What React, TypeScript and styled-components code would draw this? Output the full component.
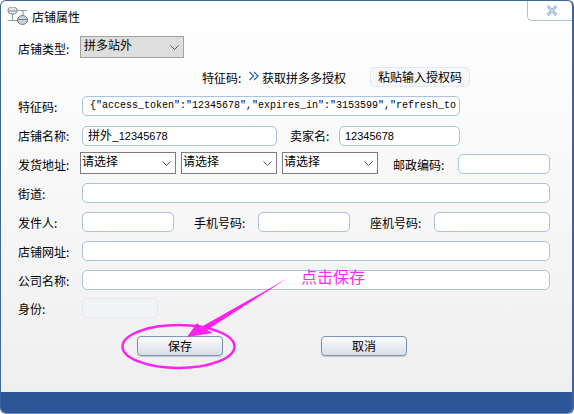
import React from "react";
import styled, { createGlobalStyle } from "styled-components";

const Global = createGlobalStyle`
  html, body { margin: 0; padding: 0; background: #fff; }
  body { font-family: "Noto Sans CJK SC", "Liberation Sans", sans-serif; font-size: 12px; color: #000; }
`;

const Win = styled.div`
  position: relative;
  width: 574px;
  height: 414px;
  box-sizing: border-box;
  border: 1px solid #3f659c;
  border-width: 1px 2px 1px 1px;
  border-bottom-color: #6f8cb8;
  border-radius: 6px;
  overflow: hidden;
  background: linear-gradient(#ffffff 0%, #f7f7f8 50%, #eeeeee 100%);
  display: flex;
  flex-direction: column;
`;

const TitleBar = styled.div`
  height: 35px;
  display: flex;
  align-items: flex-start;
  flex: none;
  position: relative;
`;

const TitleIcon = styled.svg`
  width: 22px;
  height: 20px;
  margin: 6px 0 0 6px;
  flex: none;
`;

const TitleText = styled.span`
  margin: 7px 0 0 3px;
  line-height: 18px;
  font-size: 12px;
`;

const CloseButton = styled.div`
  position: absolute;
  top: -1px;
  right: -2px;
  width: 47px;
  height: 21px;
  box-sizing: border-box;
  border: 1px solid #a9c3de;
  border-top: 0;
  border-right: 0;
  border-radius: 0 0 0 5px;
  display: flex;
  align-items: center;
  justify-content: flex-start;
  padding-left: 18px;
`;

const Form = styled.div`
  flex: 1;
  padding-left: 17px;
  display: flex;
  flex-direction: column;
`;

const Row = styled.div<{ $top: number; $h?: number }>`
  display: flex;
  align-items: flex-start;
  height: ${(p) => p.$h ?? 20}px;
  margin-top: ${(p) => p.$top}px;
  flex: none;
`;

const Label = styled.span<{ $w: number; $ml?: number; $dy?: number }>`
  width: ${(p) => p.$w}px;
  margin-left: ${(p) => p.$ml ?? 0}px;
  margin-top: ${(p) => p.$dy ?? 2}px;
  line-height: 18px;
  white-space: nowrap;
  flex: none;
`;

const Field = styled.div<{ $w: number; $ml?: number; $mt?: number; $disabled?: boolean }>`
  width: ${(p) => p.$w}px;
  height: 20px;
  margin-left: ${(p) => p.$ml ?? 0}px;
  margin-top: ${(p) => p.$mt ?? 0}px;
  box-sizing: border-box;
  flex: none;
  border: 1px solid ${(p) => (p.$disabled ? "#e4e8ef" : "#a9c3de")};
  border-radius: 5px;
  background: ${(p) => (p.$disabled ? "#f1f3f6" : "#fff")};
  padding-left: 5px;
  line-height: 15px;
  white-space: nowrap;
  overflow: hidden;
`;

const Digits = styled.span`
  font-family: "Liberation Sans", sans-serif;
  font-size: 11px;
`;

const TokenText = styled.span`
  font-family: "Liberation Mono", monospace;
  font-size: 10px;
  line-height: 18px;
  display: block;
  margin-left: 2px;
`;

const Select = styled.div<{ $w: number; $ml?: number; $grey?: boolean }>`
  width: ${(p) => p.$w}px;
  height: 22px;
  margin-left: ${(p) => p.$ml ?? 0}px;
  box-sizing: border-box;
  flex: none;
  border: 1px solid ${(p) => (p.$grey ? "#a3a3a3" : "#7d7d7d")};
  background: ${(p) => (p.$grey ? "#dedede" : "#fff")};
  padding-left: ${(p) => (p.$grey ? 3 : 1)}px;
  line-height: 16px;
  position: relative;
  display: flex;
  justify-content: space-between;
`;

const Chevron = styled.svg`
  width: 9px;
  height: 6px;
  margin: 8px 4px 0 0;
  flex: none;
`;

const LinkArrows = styled.svg`
  width: 10px;
  height: 10px;
  margin: 4px 3px 0 0;
  flex: none;
`;

const LinkText = styled.span`
  margin-top: 2px;
  line-height: 18px;
  width: 108px;
  flex: none;
`;

const PasteButton = styled.div`
  width: 100px;
  height: 20px;
  box-sizing: border-box;
  border: 1px solid #e4eaf2;
  border-radius: 5px;
  background: #f5f7fa;
  text-align: center;
  line-height: 18px;
  flex: none;
`;

const ActionRow = styled.div`
  display: flex;
  margin: 18px 0 0 119px;
  gap: 98px;
  flex: none;
`;

const ActionButton = styled.div`
  width: 86px;
  height: 20px;
  box-sizing: border-box;
  border: 1px solid #7f95b5;
  border-radius: 4px;
  background: linear-gradient(#fbfcfd, #d9dde6);
  box-shadow: 0 1px 1px #c4c8d0;
  text-align: center;
  line-height: 18px;
  color: #000;
`;

const Footer = styled.div`
  height: 21px;
  background: #2b5797;
  flex: none;
`;

const Annotation = styled.svg`
  position: absolute;
  left: -1px;
  top: -1px;
  width: 574px;
  height: 414px;
  pointer-events: none;
`;

const Callout = styled.span`
  position: absolute;
  left: 300px;
  top: 264px;
  font-size: 16px;
  line-height: 22px;
  color: #ff2bf0;
`;

const Arrow = () => (
  <Chevron viewBox="0 0 9 6">
    <path d="M0.5 0.5 L4.5 4.5 L8.5 0.5" fill="none" stroke="#555" strokeWidth="1" />
  </Chevron>
);

export default function App() {
  return (
    <>
      <Global />
      <Win>
        <TitleBar>
          <TitleIcon viewBox="0 0 22 20">
            <path d="M5.5 3.5 H20 M16 3.5 V10 M5.5 7 V13.5 M0.5 13.5 H12" stroke="#7fae8c" strokeWidth="1.2" fill="none" />
            <ellipse cx="5.5" cy="3.5" rx="4.5" ry="3.5" fill="#e4e9ed" stroke="#7a8794" />
            <path d="M1 4 H10" stroke="#7a8794" />
            <ellipse cx="15.5" cy="13" rx="5" ry="4.5" fill="#c9d2da" stroke="#6f7d8a" />
            <path d="M10.5 12.5 H20.5" stroke="#6f7d8a" />
          </TitleIcon>
          <TitleText>店铺属性</TitleText>
          <CloseButton>
            <svg width="12" height="11" viewBox="0 0 12 11">
              <path d="M1.5 1 L10.5 10 M10.5 1 L1.5 10" stroke="#8fb0d4" strokeWidth="2.6" fill="none" />
              <path d="M1.5 1 L10.5 10 M10.5 1 L1.5 10" stroke="#fff" strokeWidth="0.8" fill="none" />
            </svg>
          </CloseButton>
        </TitleBar>
        <Form>
          <Row $top={0} $h={22}>
            <Label $w={62} $dy={4}>店铺类型:</Label>
            <Select $w={104} $grey>拼多站外<Arrow /></Select>
          </Row>
          <Row $top={9}>
            <Label $w={47} $ml={184}>特征码:</Label>
            <LinkArrows viewBox="0 0 10 10">
              <path d="M0.5 1 L4.5 5 L0.5 9 M5 1 L9 5 L5 9" fill="none" stroke="#2f67a8" strokeWidth="1.3" />
            </LinkArrows>
            <LinkText>获取拼多多授权</LinkText>
            <PasteButton>粘贴输入授权码</PasteButton>
          </Row>
          <Row $top={9}>
            <Label $w={64}>特征码:</Label>
            <Field $w={378}>
              <TokenText>{'{"access_token":"12345678","expires_in":"3153599","refresh_to'}</TokenText>
            </Field>
          </Row>
          <Row $top={10} $h={19}>
            <Label $w={64} $dy={1}>店铺名称:</Label>
            <Field $w={195}>拼外_<Digits>12345678</Digits></Field>
            <Label $w={49} $ml={13} $dy={1}>卖家名:</Label>
            <Field $w={121}><Digits>12345678</Digits></Field>
          </Row>
          <Row $top={7} $h={22}>
            <Label $w={62} $dy={4}>发货地址:</Label>
            <Select $w={96}>请选择<Arrow /></Select>
            <Select $w={96} $ml={5}>请选择<Arrow /></Select>
            <Select $w={96} $ml={5}>请选择<Arrow /></Select>
            <Label $w={65} $ml={15} $dy={4}>邮政编码:</Label>
            <Field $w={92} $mt={2} />
          </Row>
          <Row $top={9}>
            <Label $w={64}>街道:</Label>
            <Field $w={468} />
          </Row>
          <Row $top={9}>
            <Label $w={64}>发件人:</Label>
            <Field $w={92} />
            <Label $w={64} $ml={20}>手机号码:</Label>
            <Field $w={92} />
            <Label $w={64} $ml={20}>座机号码:</Label>
            <Field $w={116} />
          </Row>
          <Row $top={9}>
            <Label $w={64}>店铺网址:</Label>
            <Field $w={468} />
          </Row>
          <Row $top={9}>
            <Label $w={64}>公司名称:</Label>
            <Field $w={468} />
          </Row>
          <Row $top={8}>
            <Label $w={64}>身份:</Label>
            <Field $w={76} $disabled />
          </Row>
          <ActionRow>
            <ActionButton>保存</ActionButton>
            <ActionButton>取消</ActionButton>
          </ActionRow>
        </Form>
        <Footer />
        <Annotation viewBox="0 0 574 414">
          <ellipse cx="178.5" cy="346.5" rx="56" ry="21.5" fill="none" stroke="#ff22ee" strokeWidth="2.5" />
          <polygon points="187,337 197,323 201,327 288,278 207,330 213,333" fill="#ff22ee" />
        </Annotation>
        <Callout>点击保存</Callout>
      </Win>
    </>
  );
}
